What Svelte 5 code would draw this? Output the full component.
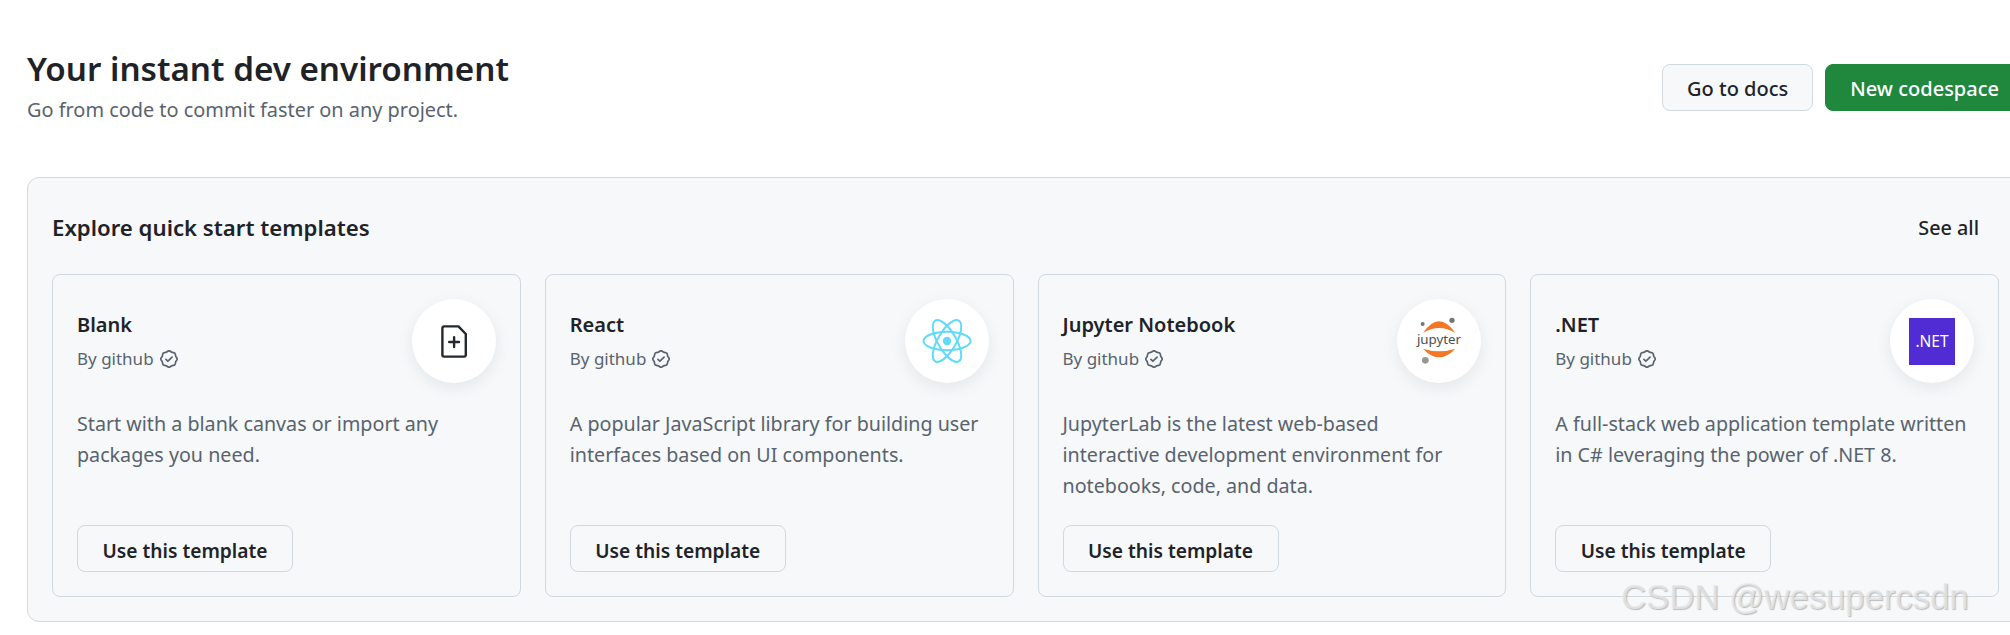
<script>
	// template cards shown in the quick start section
	const templates = [
		{
			name: "Blank",
			icon: "blank",
			desc: ["Start with a blank canvas or import any", "packages you need."],
		},
		{
			name: "React",
			icon: "react",
			desc: ["A popular JavaScript library for building user", "interfaces based on UI components."],
		},
		{
			name: "Jupyter Notebook",
			icon: "jupyter",
			desc: ["JupyterLab is the latest web-based", "interactive development environment for", "notebooks, code, and data."],
		},
		{
			name: ".NET",
			icon: "dotnet",
			desc: ["A full-stack web application template written", "in C# leveraging the power of .NET 8."],
		},
	];
</script>

<div class="page">
	<header class="header">
		<div class="heading">
			<h1>Your instant dev environment</h1>
			<p>Go from code to commit faster on any project.</p>
		</div>
		<div class="actions">
			<button class="btn">Go to docs</button>
			<button class="btn primary">New codespace</button>
		</div>
	</header>

	<section class="box">
		<div class="box-head">
			<h2>Explore quick start templates</h2>
			<span class="see-all">See all</span>
		</div>
		<div class="cards">
			{#each templates as t}
				<article class="card">
					<div class="card-top">
						<div>
							<h3>{t.name}</h3>
							<div class="by">
								By github
								<svg viewBox="0 0 16 16" width="18" height="18" fill="currentColor">
									<path d="m9.585.52.929.68c.153.112.331.186.518.215l1.138.175a2.678 2.678 0 0 1 2.24 2.24l.174 1.139c.029.187.103.365.215.518l.68.928a2.677 2.677 0 0 1 0 3.17l-.68.928a1.174 1.174 0 0 0-.215.518l-.175 1.138a2.678 2.678 0 0 1-2.241 2.241l-1.138.175a1.17 1.17 0 0 0-.518.215l-.928.68a2.677 2.677 0 0 1-3.17 0l-.928-.68a1.174 1.174 0 0 0-.518-.215L3.83 14.41a2.678 2.678 0 0 1-2.24-2.24l-.175-1.138a1.17 1.17 0 0 0-.215-.518l-.68-.928a2.677 2.677 0 0 1 0-3.17l.68-.928c.112-.153.186-.331.215-.518l.175-1.14a2.678 2.678 0 0 1 2.24-2.24l1.139-.175c.187-.029.365-.103.518-.215l.928-.68a2.677 2.677 0 0 1 3.17 0ZM7.303 1.728l-.927.68a2.67 2.67 0 0 1-1.18.489l-1.137.174a1.179 1.179 0 0 0-.987.987l-.174 1.136a2.677 2.677 0 0 1-.489 1.18l-.68.928a1.18 1.18 0 0 0 0 1.394l.68.927c.256.348.424.753.489 1.18l.174 1.137c.078.509.478.909.987.987l1.136.174a2.67 2.67 0 0 1 1.18.489l.928.68c.414.305.979.305 1.394 0l.927-.68a2.67 2.67 0 0 1 1.18-.489l1.137-.174a1.18 1.18 0 0 0 .987-.987l.174-1.136a2.67 2.67 0 0 1 .489-1.18l.68-.928a1.176 1.176 0 0 0 0-1.394l-.68-.927a2.686 2.686 0 0 1-.489-1.18l-.174-1.137a1.179 1.179 0 0 0-.987-.987l-1.136-.174a2.677 2.677 0 0 1-1.18-.489l-.928-.68a1.176 1.176 0 0 0-1.394 0ZM11.28 6.78l-3.75 3.75a.75.75 0 0 1-1.06 0L4.72 8.78a.751.751 0 0 1 .018-1.042.751.751 0 0 1 1.042-.018l1.22 1.22 3.22-3.22a.751.751 0 0 1 1.042.018.751.751 0 0 1 .018 1.042Z" />
								</svg>
							</div>
						</div>
						<div class="logo">
							{#if t.icon === "blank"}
								<svg viewBox="0 0 26 33" width="26" height="33" fill="none" stroke="#24292f" stroke-width="2.4" stroke-linejoin="round" stroke-linecap="round">
									<path d="M3 1.4H17.4L24.8 9V30a1.6 1.6 0 0 1-1.6 1.6H3A1.6 1.6 0 0 1 1.4 30V3A1.6 1.6 0 0 1 3 1.4Z" />
									<path d="M8.2 17H18M13.1 12.2V22" />
								</svg>
							{:else if t.icon === "react"}
								<svg viewBox="-25 -25 50 50" width="50" height="50" fill="none" stroke="#61dafb" stroke-width="2">
									<circle r="4.2" fill="#61dafb" stroke="none" />
									<ellipse rx="23.5" ry="9.2" />
									<ellipse rx="23.5" ry="9.2" transform="rotate(60)" />
									<ellipse rx="23.5" ry="9.2" transform="rotate(120)" />
								</svg>
							{:else if t.icon === "jupyter"}
								<svg viewBox="87 77 180 180" width="60" height="60">
									<path fill="#f37726" d="M129 143Q177 73 226 143Q177 113 129 143Z" />
									<path fill="#f37726" d="M129 190Q177 242 226 190Q177 206 129 190Z" />
									<circle cx="128" cy="116" r="6" fill="#767677" />
									<circle cx="216" cy="105" r="8" fill="#767677" />
									<circle cx="136" cy="225" r="10" fill="#989798" />
									<text x="177" y="176" text-anchor="middle" class="jup">jupyter</text>
								</svg>
							{:else}
								<div class="dotnet">.NET</div>
							{/if}
						</div>
					</div>
					<p class="desc">
						{#each t.desc as line}
							<span>{line}</span>
						{/each}
					</p>
					<button class="btn use">Use this template</button>
				</article>
			{/each}
		</div>
	</section>

	<div class="watermark">CSDN @wesupercsdn</div>
</div>

<style>
	:global(body) {
		margin: 0;
		background: #fff;
		overflow: hidden;
	}

	.page {
		position: relative;
		box-sizing: border-box;
		width: 2024px;
		height: 635px;
		padding: 48px 0 0 27px;
		font-family: "Noto Sans", sans-serif;
		color: #1f2328;
	}

	.header {
		display: flex;
		justify-content: space-between;
		align-items: flex-start;
		height: 70px;
		margin-bottom: 59px;
	}

	h1 {
		margin: 0;
		font-size: 33.2px;
		line-height: 42px;
		font-weight: 600;
	}

	.heading p {
		margin: 6px 0 0;
		font-size: 19.9px;
		line-height: 28px;
		color: #59636e;
	}

	.actions {
		display: flex;
		gap: 12px;
		margin-top: 16px;
	}

	.btn {
		box-sizing: border-box;
		height: 47px;
		padding: 1px 24px 0;
		border: 1px solid #d1d9e0;
		border-radius: 8px;
		background: #f6f8fa;
		font: 500 20px "Noto Sans", sans-serif;
		color: #1f2328;
	}

	.primary {
		background: #1f883d;
		border-color: #1f883d;
		color: #fff;
	}

	.box {
		box-sizing: border-box;
		height: 445px;
		padding: 0 24px 24px;
		border: 1px solid #d1d9e0;
		border-radius: 12px 0 0 12px;
		background: #f6f8fa;
	}

	.box-head {
		display: flex;
		justify-content: space-between;
		align-items: center;
		height: 96px;
		padding: 2px 20px 0 0;
		box-sizing: border-box;
	}

	h2 {
		margin: 0;
		font-size: 22.2px;
		font-weight: 600;
	}

	.see-all {
		font-size: 19.8px;
		font-weight: 500;
	}

	.cards {
		display: grid;
		grid-template-columns: repeat(4, 1fr);
		gap: 24px;
	}

	.card {
		box-sizing: border-box;
		display: flex;
		flex-direction: column;
		align-items: flex-start;
		height: 323px;
		padding: 24px;
		border: 1px solid #d1d9e0;
		border-radius: 8px;
	}

	.card-top {
		display: flex;
		justify-content: space-between;
		align-self: stretch;
	}

	h3 {
		margin: 12px 0 0;
		font-size: 20px;
		line-height: 28px;
		font-weight: 600;
	}

	.by {
		display: flex;
		align-items: center;
		gap: 6px;
		margin-top: 8px;
		font-size: 17px;
		line-height: 24px;
		color: #59636e;
	}

	.logo {
		display: flex;
		align-items: center;
		justify-content: center;
		width: 84px;
		height: 84px;
		border-radius: 50%;
		background: #fff;
		box-shadow: 0 5px 16px rgba(31, 35, 40, 0.08);
	}

	.jup {
		font: 400 40px "Noto Sans", sans-serif;
		fill: #4e4e4e;
	}

	.dotnet {
		display: flex;
		align-items: center;
		justify-content: center;
		width: 46px;
		height: 47px;
		background: #512bd4;
		color: #fff;
		font-size: 15.5px;
	}

	.desc {
		margin: 25px 0 0;
		font-size: 19.7px;
		line-height: 31px;
		color: #59636e;
	}

	.desc span {
		display: block;
	}

	.use {
		margin-top: auto;
		width: 216px;
		padding: 3px 0 0;
		font-size: 19.2px;
		font-weight: 600;
	}

	.watermark {
		position: absolute;
		left: 1621px;
		top: 578px;
		font-family: "Liberation Sans", sans-serif;
		font-size: 34.7px;
		white-space: nowrap;
		color: rgba(232, 232, 232, 0.8);
		text-shadow: 1px 1px 1px rgba(130, 130, 130, 0.5);
	}
</style>
